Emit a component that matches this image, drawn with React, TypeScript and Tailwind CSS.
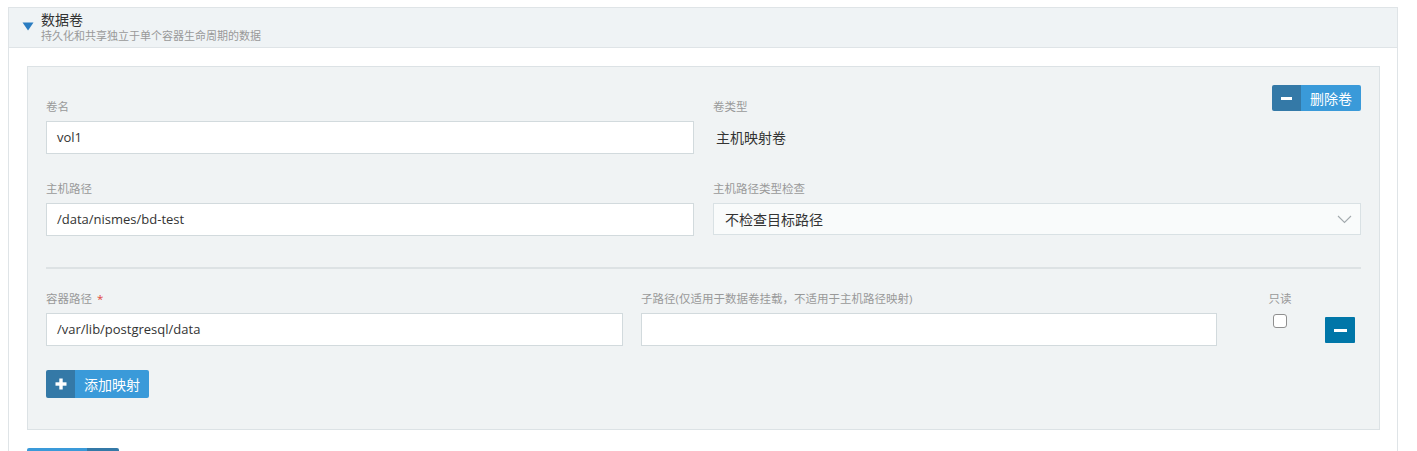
import { useState } from 'react';

const cjk = 'font-["Open_Sans","Noto_Sans_CJK_SC",sans-serif]';

function FieldLabel({ text, required }: { text: string; required?: boolean }) {
  return (
    <div className="h-4 mb-[6px] text-[11.5px] leading-4 text-[#999] whitespace-nowrap">
      {text}
      {required && <span className="ml-[5px] text-[#e0453a]">*</span>}
    </div>
  );
}

function TextInput({ value }: { value: string }) {
  return (
    <div className="h-[33px] w-full flex items-center bg-white border border-[#d2dadd] pl-[10px] text-[13px] text-[#333]">
      {value}
    </div>
  );
}

function Chevron() {
  return (
    <svg width="15" height="9" viewBox="0 0 15 9" fill="none">
      <path d="M1 1l6.5 6.5L14 1" stroke="#a3aaae" strokeWidth="1.1" />
    </svg>
  );
}

// bootstrap-like split button: icon cell on a darker shade
function SplitButton({ icon, label, h }: { icon: 'plus' | 'minus'; label: string; h: string }) {
  return (
    <button className={`flex ${h} rounded-[2px] overflow-hidden text-white`}>
      <span className="w-[29px] flex items-center justify-center bg-[#3479a7]">
        {icon === 'plus' ? (
          <svg width="12" height="12" viewBox="0 0 12 12">
            <rect x="4.3" y="0.5" width="3.4" height="11" fill="#fff" />
            <rect x="0.5" y="4.3" width="11" height="3.4" fill="#fff" />
          </svg>
        ) : (
          <span className="block w-[11px] h-[3px] bg-white" />
        )}
      </span>
      <span className="flex items-center bg-[#3a9ad9] px-[9px] text-[14px]">{label}</span>
    </button>
  );
}

export default function App() {
  const [open] = useState(true);

  return (
    <div className={`${cjk} bg-white min-h-[451px] pt-[7px] pl-[8px]`}>
      <div className="w-[1390px] border border-[#dfe4e7] border-b-0 min-h-[444px]">
        {/* section header */}
        <div className="h-[40px] bg-[#eff3f5] border-b border-[#dfe4e7] flex items-center pl-[13px] pb-[2px]">
          <svg width="12" height="9" viewBox="0 0 12 9" className="mr-[7px]">
            <path d="M0.5 0.5h11L6 8.5z" fill={open ? '#2a7cc1' : '#999'} />
          </svg>
          <div>
            <div className="text-[14px] leading-[18px] text-[#333]">数据卷</div>
            <div className="text-[11px] leading-[14px] text-[#999]">持久化和共享独立于单个容器生命周期的数据</div>
          </div>
        </div>

        <div className="pt-[18px] pl-[18px] pr-[17px]">
          {/* volume card */}
          <div className="bg-[#f0f3f4] border border-[#dce2e5] pt-[18px] px-[18px] pb-[31px]">
            <div className="flex justify-end">
              <SplitButton icon="minus" label="删除卷" h="h-[26px]" />
            </div>

            <div className="-mt-[12px] grid grid-cols-2 gap-x-[19px]">
              <div>
                <FieldLabel text="卷名" />
                <TextInput value="vol1" />
              </div>
              <div>
                <FieldLabel text="卷类型" />
                <div className="h-[33px] flex items-center pl-[3px] text-[14px] text-[#333]">主机映射卷</div>
              </div>

              <div className="mt-[27px]">
                <FieldLabel text="主机路径" />
                <TextInput value="/data/nismes/bd-test" />
              </div>
              <div className="mt-[27px]">
                <FieldLabel text="主机路径类型检查" />
                <div className="h-[32px] flex items-center justify-between bg-[#f9fbfb] border border-[#d9e1e4] pl-[11px] pr-[8px] text-[14px] text-[#333]">
                  <span>不检查目标路径</span>
                  <Chevron />
                </div>
              </div>
            </div>

            <div className="mt-[31px] h-[2px] bg-[#dde2e4]" />

            {/* mount row */}
            <div className="mt-[22px] flex items-start">
              <div className="w-[577px]">
                <FieldLabel text="容器路径" required />
                <TextInput value="/var/lib/postgresql/data" />
              </div>
              <div className="w-[576px] ml-[18px]">
                <FieldLabel text="子路径(仅适用于数据卷挂载，不适用于主机路径映射)" />
                <TextInput value="" />
              </div>
              <div className="ml-[51px] w-[24px] flex flex-col items-center">
                <FieldLabel text="只读" />
                <span className="mt-[1px] block w-[14px] h-[14px] rounded-[3px] border border-[#8f8f8f] bg-white" />
              </div>
              <button className="ml-[33px] mt-[26px] w-[30px] h-[26px] rounded-[1px] flex items-center justify-center bg-[#0076a8]">
                <span className="block w-[13px] h-[3px] bg-white" />
              </button>
            </div>

            <div className="mt-[24px] flex">
              <SplitButton icon="plus" label="添加映射" h="h-[28px]" />
            </div>
          </div>

          <div className="mt-[18px] flex">
            <div className="flex h-[28px] rounded-[2px] overflow-hidden">
              <span className="w-[60px] bg-[#3a9ad9]" />
              <span className="w-[32px] bg-[#3479a7]" />
            </div>
          </div>
        </div>
      </div>
    </div>
  );
}
